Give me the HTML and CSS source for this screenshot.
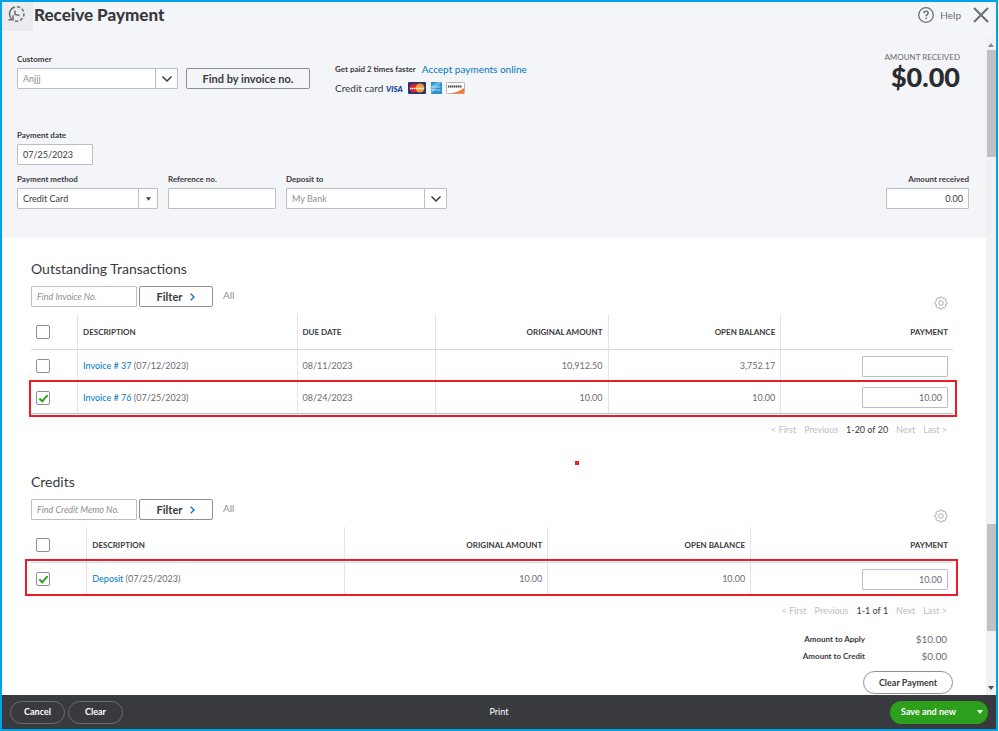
FILE: index.html
```html
<!DOCTYPE html>
<html lang="en">
<head>
  <meta charset="UTF-8">
  <meta name="viewport" content="width=device-width, initial-scale=1.0">
  <title>Receive Payment</title>
  <link rel="stylesheet" href="styles.css">
</head>
<body>
  <svg width="0" height="0" class="sprite" aria-hidden="true">
    <symbol id="chevron" viewBox="0 0 12 8"><path d="M1.500 1.500 6 6l4.500-4.500" fill="none" stroke="#393a3d" stroke-width="1.500"/></symbol>
    <symbol id="gear" viewBox="0 0 14 14">
      <g fill="none" stroke="#a9acb1">
        <path d="M5.300 2.500Q5.500.8 7 .8T8.700 2.500Q10.200 1.500 11.300 2.600T11.500 5.300Q13.200 5.500 13.200 7T11.500 8.700Q12.500 10.300 11.400 11.400T8.700 11.500Q8.500 13.200 7 13.200T5.300 11.500Q3.700 12.500 2.600 11.400T2.500 8.700Q.8 8.500.8 7T2.500 5.300Q1.500 3.700 2.600 2.600T5.300 2.500Z"/>
        <circle cx="7" cy="7" r="2.300"/>
      </g>
    </symbol>
  </svg>

  <div class="window">
    <header class="topbar">
      <button class="history" aria-label="Recent payments">
        <svg width="18" height="18" viewBox="0 0 18 18" fill="none" stroke="#6b6c72" stroke-width="1.500">
          <path d="M4 14.500A7.300 7.300 0 0 1 7 2"/>
          <path d="M9 1.700A7.300 7.300 0 1 1 6 15.800" stroke-dasharray="3.200 2"/>
          <path d="M.5 14.800h4.500v-4.500M7 5.500v4l4.500 1"/>
        </svg>
      </button>
      <h1>Receive Payment</h1>
      <button class="help">
        <svg width="16" height="16" viewBox="0 0 16 16" fill="none" stroke="#6b6c72">
          <circle cx="8" cy="8" r="7.300" stroke-width="1.300"/>
          <path d="M5.900 6.300c0-2.800 4.300-2.700 4.300-.2 0 1.500-2.100 1.500-2.100 3.200M8.100 10.500v1.500" stroke-width="1.500"/>
        </svg>
        Help
      </button>
      <button class="close" aria-label="Close">
        <svg width="16" height="16" viewBox="0 0 16 16"><path d="M1 1l14 14M15 1 1 15" stroke="#6b6c72" stroke-width="2"/></svg>
      </button>
    </header>

    <div class="workspace">
      <main class="content">
        <form class="details">
          <div class="row customer-row">
            <div class="field">
              <label for="customer">Customer</label>
              <div class="select w-customer">
                <select id="customer" class="muted"><option>Anjjj</option></select>
                <span class="arrow"><svg width="12" height="8"><use href="#chevron"/></svg></span>
              </div>
            </div>
            <button type="button" class="find">Find by invoice no.</button>
            <div class="promo">
              <p><strong>Get paid 2 times faster</strong> <a href="#">Accept payments online</a></p>
              <p class="cards">Credit card
                <svg width="79" height="12" viewBox="0 0 79 12" role="img" aria-label="Accepted cards">
                  <text x="0" y="10" class="visa">VISA</text>
                  <rect x="22" y="0" width="18" height="12" rx="1" fill="#27357b"/>
                  <circle cx="28" cy="6" r="4.500" fill="#d8232a"/>
                  <circle cx="34" cy="6" r="4.500" fill="#f29a2e"/>
                  <path d="M24 6.500h14" stroke="#fff" stroke-width="1.500" stroke-dasharray="1.500 .5"/>
                  <rect x="45" y="0" width="11" height="12" fill="#2b8fd0"/>
                  <path d="M45 12V4l6-4h5z" fill="#62b5e5"/>
                  <path d="M46 5h9M46 8h9" stroke="#e5f3fb" stroke-dasharray="1.500 .7"/>
                  <rect x="60.500" y=".5" width="18" height="11" rx="1" fill="#fff" stroke="#b4b6ba"/>
                  <path d="M78 6v5.500H64Q73 10 78 6" fill="#f47b30"/>
                  <path d="M62 4.500h14" stroke="#444" stroke-width="2" stroke-dasharray="1.500 .5"/>
                </svg>
              </p>
            </div>
            <div class="amount">
              <span>AMOUNT RECEIVED</span>
              <strong>$0.00</strong>
            </div>
          </div>

          <div class="row">
            <div class="field">
              <label for="date">Payment date</label>
              <input id="date" class="w-date" type="text" value="07/25/2023">
            </div>
          </div>

          <div class="row">
            <div class="field">
              <label for="method">Payment method</label>
              <div class="select w-method">
                <select id="method"><option>Credit Card</option></select>
                <span class="arrow narrow"><svg width="5" height="4" viewBox="0 0 6 4"><path d="M0 0h6L3 4z" fill="#393a3d"/></svg></span>
              </div>
            </div>
            <div class="field">
              <label for="reference">Reference no.</label>
              <input id="reference" class="w-reference" type="text">
            </div>
            <div class="field">
              <label for="deposit">Deposit to</label>
              <div class="select w-customer">
                <select id="deposit" class="muted"><option>My Bank</option></select>
                <span class="arrow"><svg width="12" height="8"><use href="#chevron"/></svg></span>
              </div>
            </div>
            <div class="field right">
              <label for="received">Amount received</label>
              <input id="received" class="w-amount" type="text" value="0.00">
            </div>
          </div>
        </form>

        <section class="list">
          <h2>Outstanding Transactions</h2>
          <div class="tools">
            <input class="search" type="text" placeholder="Find Invoice No." aria-label="Find Invoice No.">
            <button class="filter">Filter <svg width="5" height="8" viewBox="0 0 5 8"><path d="M.7.8 4 4 .7 7.200" fill="none" stroke="#0077c5" stroke-width="1.300"/></svg></button>
            <span class="all">All</span>
            <button class="gear" aria-label="Settings"><svg width="14" height="14"><use href="#gear"/></svg></button>
          </div>
          <div class="marked">
            <table class="invoices">
              <colgroup><col class="c-check"><col class="c-desc"><col class="c-date"><col><col><col></colgroup>
              <thead>
                <tr>
                  <th><input type="checkbox" aria-label="Select all invoices"></th>
                  <th>DESCRIPTION</th>
                  <th>DUE DATE</th>
                  <th class="num">ORIGINAL AMOUNT</th>
                  <th class="num">OPEN BALANCE</th>
                  <th class="num">PAYMENT</th>
                </tr>
              </thead>
              <tbody>
                <tr>
                  <td><input type="checkbox" aria-label="Invoice 37"></td>
                  <td><a href="#">Invoice # 37</a> (07/12/2023)</td>
                  <td>08/11/2023</td>
                  <td class="num">10,912.50</td>
                  <td class="num">3,752.17</td>
                  <td class="num"><input class="pay" type="text" aria-label="Payment for invoice 37"></td>
                </tr>
                <tr>
                  <td><input type="checkbox" checked aria-label="Invoice 76"></td>
                  <td><a href="#">Invoice # 76</a> (07/25/2023)</td>
                  <td>08/24/2023</td>
                  <td class="num">10.00</td>
                  <td class="num">10.00</td>
                  <td class="num"><input class="pay" type="text" value="10.00" aria-label="Payment for invoice 76"></td>
                </tr>
              </tbody>
            </table>
          </div>
          <nav class="pager">
            <span>&lt; First</span><span>Previous</span><b>1-20 of 20</b><span>Next</span><span>Last &gt;</span>
          </nav>
          <i class="dot"></i>
        </section>

        <section class="list last">
          <h2>Credits</h2>
          <div class="tools">
            <input class="search" type="text" placeholder="Find Credit Memo No." aria-label="Find Credit Memo No.">
            <button class="filter">Filter <svg width="5" height="8" viewBox="0 0 5 8"><path d="M.7.8 4 4 .7 7.200" fill="none" stroke="#0077c5" stroke-width="1.300"/></svg></button>
            <span class="all">All</span>
            <button class="gear" aria-label="Settings"><svg width="14" height="14"><use href="#gear"/></svg></button>
          </div>
          <div class="marked wide">
            <table class="credits">
              <colgroup><col class="c-check"><col class="c-desc"><col><col><col></colgroup>
              <thead>
                <tr>
                  <th><input type="checkbox" aria-label="Select all credits"></th>
                  <th>DESCRIPTION</th>
                  <th class="num">ORIGINAL AMOUNT</th>
                  <th class="num">OPEN BALANCE</th>
                  <th class="num">PAYMENT</th>
                </tr>
              </thead>
              <tbody>
                <tr>
                  <td><input type="checkbox" checked aria-label="Deposit"></td>
                  <td><a href="#">Deposit</a> (07/25/2023)</td>
                  <td class="num">10.00</td>
                  <td class="num">10.00</td>
                  <td class="num"><input class="pay" type="text" value="10.00" aria-label="Payment for deposit"></td>
                </tr>
              </tbody>
            </table>
          </div>
          <nav class="pager">
            <span>&lt; First</span><span>Previous</span><b>1-1 of 1</b><span>Next</span><span>Last &gt;</span>
          </nav>
        </section>

        <div class="totals">
          <dl>
            <dt>Amount to Apply</dt><dd>$10.00</dd>
            <dt>Amount to Credit</dt><dd>$0.00</dd>
          </dl>
          <button class="clear-payment">Clear Payment</button>
        </div>
      </main>

      <div class="scrollbar" aria-hidden="true">
        <svg width="6" height="4" viewBox="0 0 6 4"><path d="M0 4h6L3 0z" fill="#8b8b8b"/></svg>
        <div class="thumb"></div>
        <div class="thumb lower"></div>
        <svg width="6" height="4" viewBox="0 0 6 4"><path d="M0 0h6L3 4z" fill="#505050"/></svg>
      </div>
    </div>

    <footer class="actions">
      <div class="left">
        <button class="pill">Cancel</button>
        <button class="pill">Clear</button>
      </div>
      <button class="print">Print</button>
      <button class="save">Save and new <svg width="6" height="4" viewBox="0 0 6 4"><path d="M0 0h6L3 4z" fill="#fff"/></svg></button>
    </footer>
  </div>
</body>
</html>
```
FILE: styles.css
```css
*, ::before, ::after { box-sizing: border-box; }
body { margin: 0; font-family: Lato, "Liberation Sans", sans-serif; font-size: 9px; line-height: 12px; color: #393a3d; background: #fff; }
h1, h2, p, dl, dd { margin: 0; }
a { color: #0077c5; text-decoration: none; }
button, input, select { font: inherit; color: inherit; margin: 0; }
button { padding: 0; border: 0; background: none; cursor: pointer; }
svg { display: block; flex: none; }
.sprite { position: absolute; }

.window { display: flex; flex-direction: column; height: 100vh; margin-right: 1px; border: 2px solid #00a2e8; }

/* header */
.topbar { display: flex; align-items: center; height: 36px; padding: 0 7px 10px 0; background: #f4f5f8; }
.history { align-self: flex-start; width: 31px; height: 29px; padding: 3px 6px 8px; background: #ebecf0; }
h1 { flex: 1; padding-left: 1px; font-size: 17px; line-height: 20px; font-weight: 900; }
.help { display: flex; align-items: center; gap: 6px; font-size: 10px; color: #6b6c72; }
.close { margin-left: 12px; }

.workspace { flex: 1; display: flex; min-height: 0; }
.content { flex: 1; min-width: 0; overflow: hidden; }

/* payment details */
.details { display: flex; flex-direction: column; gap: 8px; height: 200px; padding: 15px 17px 0 15px; background: #f4f5f8; }
.row { display: flex; align-items: flex-end; gap: 10px; }
.customer-row { align-items: flex-start; gap: 8px; height: 68px; }
.field { display: flex; flex-direction: column; gap: 3px; }
.field label { font-size: 8px; font-weight: bold; line-height: 12px; }
.right { margin-left: auto; text-align: right; }
input[type="text"], select { height: 21px; padding: 0 5px; border: 1px solid #babec5; border-radius: 1px; background: #fff; outline: 0; }
.select { position: relative; }
select { width: 100%; appearance: none; }
.muted { color: #8d9096; }
.arrow { position: absolute; top: 0; right: 0; display: flex; align-items: center; justify-content: center; width: 23px; height: 21px; border-left: 1px solid #babec5; pointer-events: none; }
.narrow { width: 20px; }
.w-customer { width: 161px; }
.w-date { width: 76px; }
.w-method { width: 141px; }
.w-reference { width: 108px; }
.w-amount { width: 83px; text-align: right; }
.find { width: 124px; height: 21px; margin-top: 15px; border: 1px solid #8d9096; border-radius: 2px; font-size: 11px; font-weight: bold; }
.promo { margin: 6px 0 0 17px; }
.promo p { display: flex; align-items: center; gap: 6px; height: 19px; }
.promo strong { font-size: 8px; }
.promo a { font-size: 10px; }
.promo .cards { gap: 3px; font-size: 10px; }
.visa { font-size: 8px; font-weight: 900; font-style: italic; fill: #0e4595; }
.amount { display: flex; flex-direction: column; margin: -2px 9px 0 auto; text-align: right; color: #6b6c72; }
.amount span { font-size: 8px; }
.amount strong { font-size: 27px; line-height: 28px; font-weight: 900; color: #2b2c2e; }

/* transaction lists */
.list { position: relative; height: 213px; padding: 21px 33px 0 29px; }
.last { height: 182px; }
h2 { font-size: 14px; line-height: 20px; font-weight: normal; }
.tools { display: flex; gap: 2px; height: 35px; padding-top: 7px; }
.search { width: 106px; font-style: italic; }
.search::placeholder { color: #8d9096; }
.filter { display: flex; align-items: center; justify-content: center; gap: 8px; width: 74px; height: 21px; border: 1px solid #8d9096; border-radius: 2px; font-size: 11px; font-weight: bold; }
.all { margin: 3px 0 0 8px; font-size: 10px; color: #8d9096; }
.gear { margin-left: auto; padding: 10px 5px 0 0; height: 24px; }

table { width: 100%; table-layout: fixed; border-collapse: separate; border-spacing: 0; }
th, td { height: 32px; padding: 0 5px; border-left: 1px solid #e3e5e8; text-align: left; white-space: nowrap; }
th { height: 36px; border-bottom: 1px solid #d4d7dc; font-size: 8px; }
th:first-child, td:first-child { border-left: 0; }
td { color: #6b6c72; }
th.num, td.num { text-align: right; }
.invoices .c-check { width: 5%; }
.invoices .c-desc { width: 23.8%; }
.invoices .c-date { width: 15%; }
.credits .c-check { width: 6%; }
.credits .c-desc { width: 28%; }
.pay { width: 86px; text-align: right; vertical-align: middle; }
input[type="checkbox"] { appearance: none; display: block; position: relative; width: 14px; height: 14px; border: 1px solid #8d9096; border-radius: 2px; background: #fff; }
input[type="checkbox"]:checked::before { content: ""; position: absolute; left: 4px; top: 1px; width: 5px; height: 9px; border: solid #2ca01c; border-width: 0 2px 2px 0; transform: rotate(42deg); }
.invoices tr:last-child td { border-bottom: 1px solid #babec5; }

/* red frame round the matched row */
.marked { position: relative; }
.marked::after { content: ""; position: absolute; left: -2px; right: -4px; bottom: -3px; height: 37px; border: 2px solid #ec1c24; pointer-events: none; }
.wide::after { left: -6px; right: -5px; bottom: -1px; }
.dot { position: absolute; left: 58%; bottom: -14px; width: 4px; height: 4px; margin-left: 2px; background: #ec1c24; }

.pager { display: flex; justify-content: flex-end; gap: 8px; padding: 10px 6px 0 0; color: #babec5; }
.pager b { font-weight: normal; color: #393a3d; }

.totals { display: flex; flex-direction: column; align-items: flex-end; gap: 9px; padding-right: 33px; }
.totals dl { display: grid; grid-template-columns: auto 82px; row-gap: 5px; padding-right: 6px; text-align: right; }
.totals dt { font-size: 8px; font-weight: bold; }
.totals dd { font-size: 10px; color: #6b6c72; }
.clear-payment { width: 90px; height: 23px; border: 1px solid #8d9096; border-radius: 12px; font-weight: bold; }

/* scroll track */
.scrollbar { display: flex; flex-direction: column; align-items: center; width: 10px; padding: 5px 0; background: #f1f1f1; }
.thumb { width: 9px; height: 107px; margin-top: 3px; background: #c1c1c1; }
.lower { margin: auto 0 55px; }

/* footer */
.actions { flex: none; display: grid; grid-template-columns: 1fr auto 1fr; align-items: center; height: 34px; padding: 0 8px; background: #393a3d; color: #fff; font-weight: bold; }
.left { display: flex; gap: 3px; }
.pill { width: 55px; height: 23px; border: 1px solid #6b6c72; border-radius: 12px; }
.print { font-weight: normal; }
.save { justify-self: end; display: flex; align-items: center; justify-content: space-between; width: 98px; height: 23px; padding: 0 5px 0 11px; border-radius: 12px; background: #2ca01c; }
```
